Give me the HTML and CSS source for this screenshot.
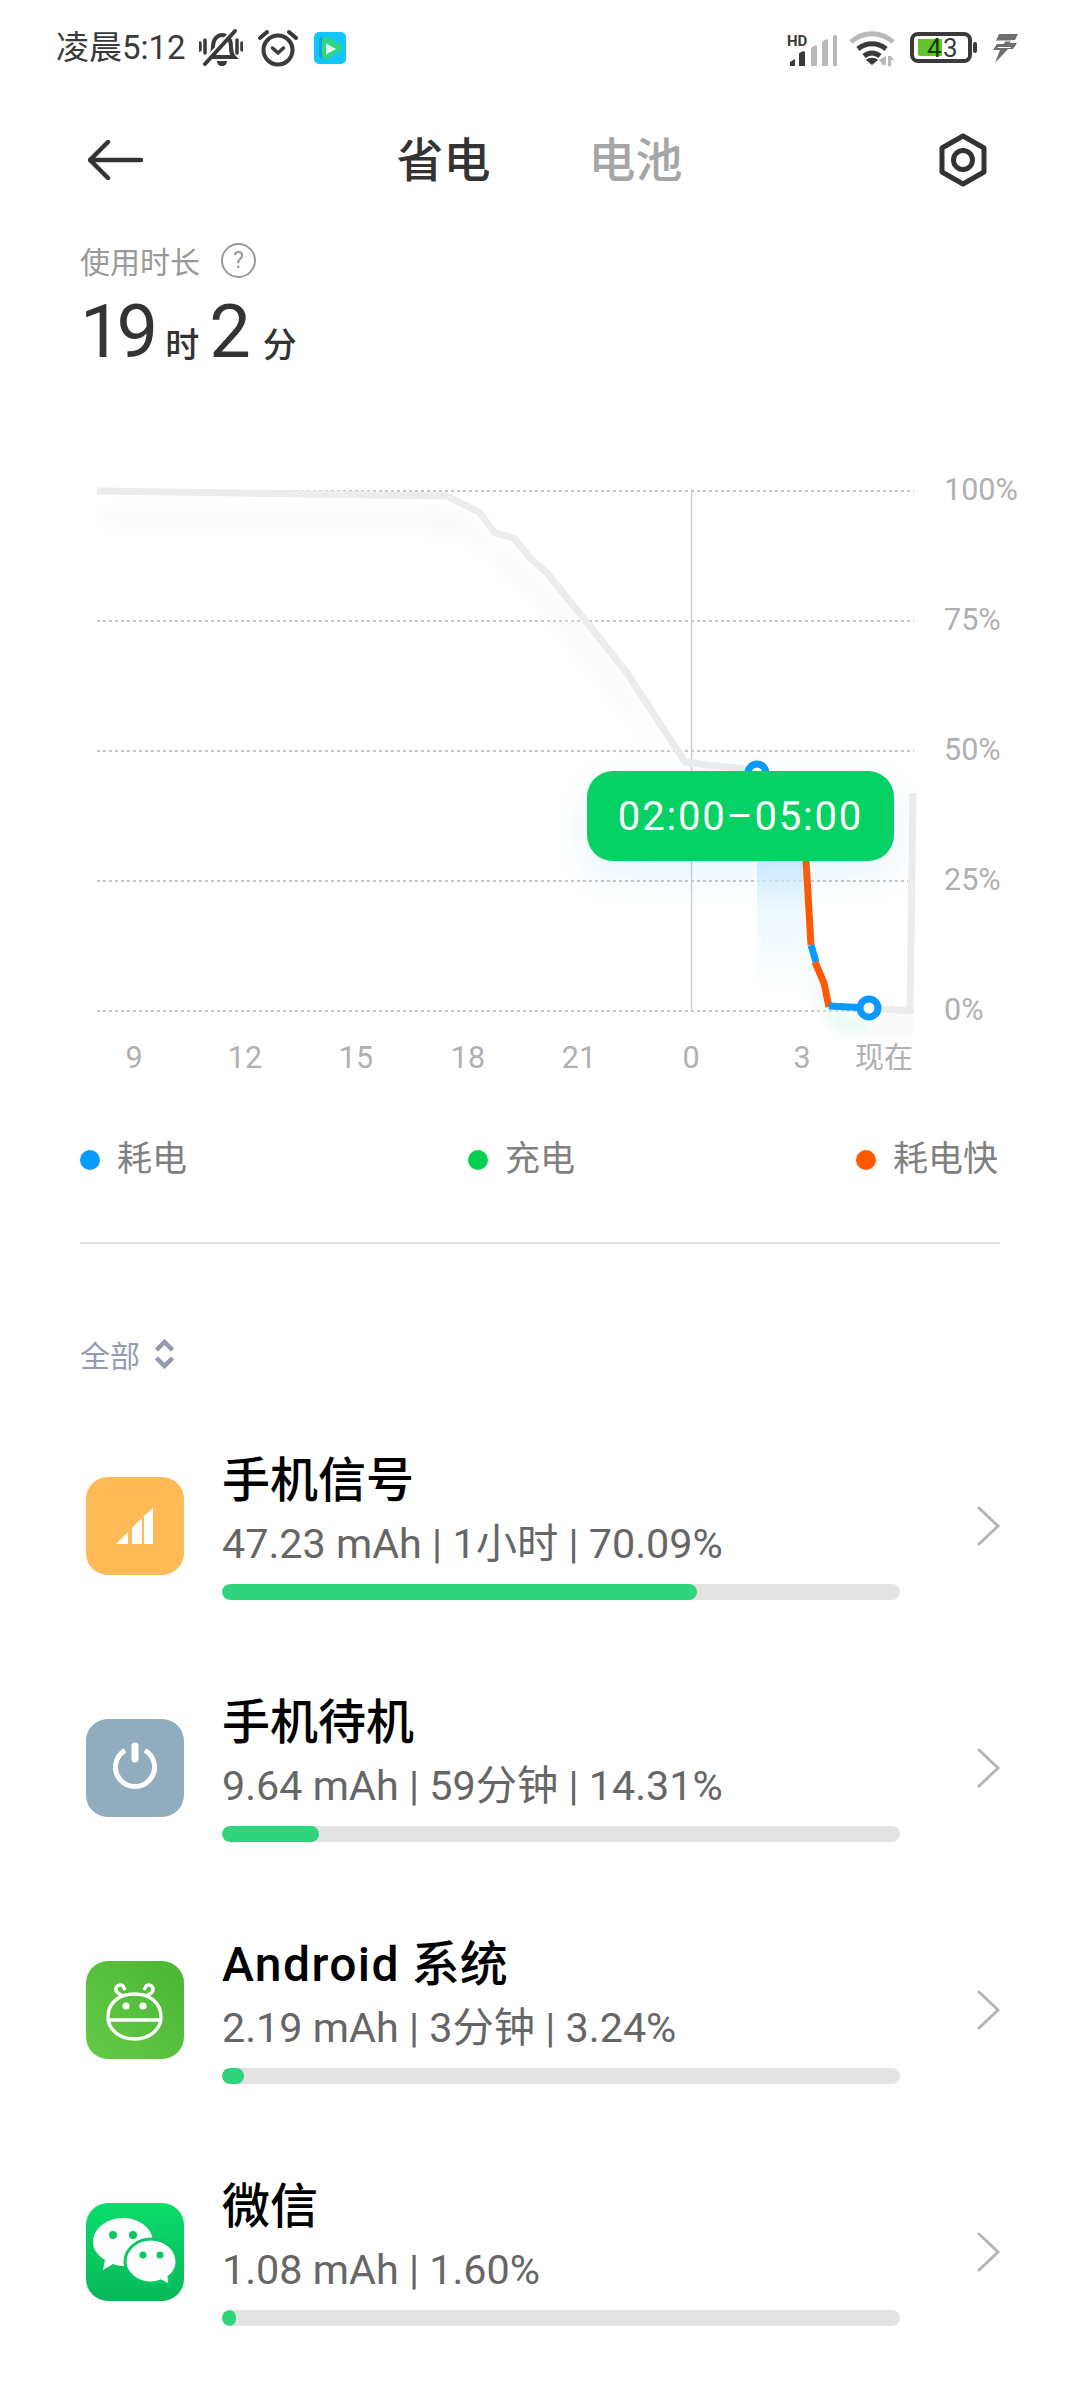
FILE: index.html
```html
<!DOCTYPE html>
<html lang="zh-CN">
<head>
<meta charset="utf-8">
<title>省电</title>
<link rel="stylesheet" href="styles.css">
</head>
<body>
<div class="screen">
  <header class="status">
    <div class="status-left">
      <span class="clock">凌晨5:12</span>
      <svg class="ic-bell" viewBox="0 0 44 40" aria-hidden="true">
        <path class="ink" d="M11 29c3-3 3-6 3-11 0-6 4-11 9-11s9 4 9 11c0 5 0 8 3 11z"/>
        <path class="cut" d="M5 33L36 0"/>
        <path class="ink" d="M6 36L36 3" />
        <path class="ink thin" d="M1 15v7M6 12v13M38 12v13M43 15v7"/>
        <path class="solid" d="M18 33h10c0 3-2 5-5 5s-5-2-5-5z"/>
      </svg>
      <svg class="ic-alarm" viewBox="0 0 40 38" aria-hidden="true">
        <circle class="ink" cx="20" cy="21" r="14.500"/>
        <path class="ink" d="M2 9L9 3M38 9L31 3"/>
        <path class="ink thin" d="M14.500 19l5.500 5 5.500-5"/>
      </svg>
      <svg class="ic-app" viewBox="0 0 32 32" aria-hidden="true">
        <rect width="32" height="32" rx="5" fill="#12c6fd"/>
        <path d="M5 8c0-3 2-3 4-3l2 0v23l-2-1c-3-1-4-2-4-4z" fill="#10a6e0"/>
        <path d="M8 8c0-3 2-4 5-3l13 7c4 2 4 5 0 7l-13 8c-3 1-5 0-5-3z" fill="#2fd783"/>
        <path d="M12 11.500l10 5.500-10 5.500z" fill="#dffbf0"/>
      </svg>
    </div>
    <div class="status-right">
      <svg class="ic-signal" viewBox="0 -6 50 40" aria-hidden="true">
        <text class="hd" x="0" y="12">HD</text>
        <path fill="#3a3a3a" d="M3 32v-4l5-3v7zM12 32V20c0-2 6-4 6-2v14z"/>
        <path fill="#b9b9b9" d="M24 32V15c0-2 6-5 6-3v20zM35 32V9c0-2 6-5 6-3v26zM46 32V3c0-2 4-3 4-1v30z"/>
      </svg>
      <svg class="ic-wifi" viewBox="0 0 46 36" aria-hidden="true">
        <path class="arc grey" d="M2 12C14 1 32 1 44 12"/>
        <path class="arc" d="M9 19c8-7 20-7 28 0"/>
        <path class="arc" d="M15 26c5-4 11-4 16 0"/>
        <path fill="#3a3a3a" d="M23 35l-6-5c3-3 9-3 12 0z"/>
        <path fill="#b9b9b9" d="M37 26v9h-3l-4-5zM39 26h3l3 4h-3v6h-3z"/>
      </svg>
      <svg class="ic-battery" viewBox="0 0 68 32" aria-hidden="true">
        <rect x="2" y="2" width="58" height="27" rx="6" fill="none" stroke="#3a3a3a" stroke-width="4"/>
        <path fill="#62c32c" d="M8 7h24v17H10c-1 0-2-1-2-2z"/>
        <rect x="63" y="10" width="4" height="11" rx="2" fill="#3a3a3a"/>
        <text class="b-tens" x="17" y="25">4</text>
        <text class="b-ones" x="33" y="25">3</text>
      </svg>
      <svg class="ic-bolt" viewBox="0 0 28 30" aria-hidden="true">
        <path fill="#6f6f6f" d="M8 1h19l-3 6h-4l-1 3h7l-4 6h-5L4 30l5-13H2l4-6h7l1-3H5z"/>
        <path fill="#fff" d="M6 7.500h16l-.6 1H5.400zM7 14h13l-.6 1H6.400z"/>
      </svg>
    </div>
  </header>

  <nav class="topbar">
    <svg class="ic-back" viewBox="0 0 56 40" aria-hidden="true">
      <path d="M2 20h51M20 2L2 20l18 18"/>
    </svg>
    <div class="tabs">
      <span class="tab tab-on">省电</span>
      <span class="tab">电池</span>
    </div>
    <svg class="ic-gear" viewBox="0 0 50 54" aria-hidden="true">
      <path d="M25 3l21 12v24L25 51 4 39V15z"/>
      <circle cx="25" cy="27" r="9.500"/>
    </svg>
  </nav>

  <section class="usage">
    <div class="usage-label">
      <span>使用时长</span>
      <span class="help">?</span>
    </div>
    <div class="usage-value">
      <span class="num">19</span><span class="unit">时</span><span class="num">2</span><span class="unit unit-end">分</span>
    </div>
  </section>

  <section class="chart">
    <svg class="plot" viewBox="0 470 1080 620" aria-label="电量曲线">
      <defs>
        <linearGradient id="drainGlow" x1="0" y1="0" x2="0" y2="1">
          <stop offset="0" stop-color="#c6e9ff" stop-opacity=".8"/>
          <stop offset=".5" stop-color="#e2f4ff" stop-opacity=".45"/>
          <stop offset="1" stop-color="#eef9ff" stop-opacity="0"/>
        </linearGradient>
        <filter id="soft" x="-10%" y="-20%" width="120%" height="140%">
          <feGaussianBlur stdDeviation="9"/>
        </filter>
        <filter id="softer" x="-30%" y="-30%" width="160%" height="160%">
          <feGaussianBlur stdDeviation="6"/>
        </filter>
      </defs>

      <g class="grid">
        <line x1="97" y1="491" x2="914" y2="491"/>
        <line x1="97" y1="621" x2="914" y2="621"/>
        <line x1="97" y1="751" x2="914" y2="751"/>
        <line x1="97" y1="881" x2="908" y2="881"/>
        <line x1="97" y1="1011" x2="914" y2="1011"/>
      </g>
      <line class="now-line" x1="691.500" y1="491" x2="691.500" y2="1011"/>

      <path class="haze" filter="url(#soft)" d="M100 512H447L479 530 495 552 514 558 530 578 547 592 590 640 627 695 670 770 685 790 620 700 540 600 470 535 400 522 100 522z"/>
      <path d="M757 850H806L811 945 816 962 824 983 829 1005H757z" fill="url(#drainGlow)"/>
      <path d="M805 975L830 1011 869 1014V1034H845Q820 1025 805 975z" fill="#e3f6ee" opacity=".7" filter="url(#softer)"/>
      <rect x="869" y="1014" width="44" height="22" fill="#fafafa"/>

      <path class="trace-idle" d="M97 491L447 496 479 512 495 533 514 538 530 558 547 573 589 625 627 673 685 762 707 765 757 770"/>
      <path class="trace-idle" d="M869 1008L910 1011 913 793"/>
      <path class="trace-fast" d="M757 773L790 800 806 860 811 945"/>
      <path class="trace-blue" d="M811 945L816 962"/>
      <path class="trace-fast" d="M815 962L824 983 829 1007"/>
      <path class="trace-blue" d="M829 1006L869 1008"/>
      <circle class="knob" cx="757" cy="773" r="9"/>
      <circle class="knob" cx="869" cy="1008" r="9"/>

      <g class="axis-y">
        <text x="944" y="500">100%</text>
        <text x="944" y="630">75%</text>
        <text x="944" y="760">50%</text>
        <text x="944" y="890">25%</text>
        <text x="944" y="1020">0%</text>
      </g>
      <g class="axis-x">
        <text x="134" y="1068">9</text>
        <text x="245" y="1068">12</text>
        <text x="356" y="1068">15</text>
        <text x="468" y="1068">18</text>
        <text x="579" y="1068">21</text>
        <text x="691" y="1068">0</text>
        <text x="802" y="1068">3</text>
        <text class="now" x="913" y="1068">现在</text>
      </g>
    </svg>
    <div class="tip">02:00–05:00</div>
  </section>

  <section class="legend">
    <span class="key"><i class="dot dot-blue"></i>耗电</span>
    <span class="key"><i class="dot dot-green"></i>充电</span>
    <span class="key"><i class="dot dot-orange"></i>耗电快</span>
  </section>

  <hr class="rule">

  <div class="filter">
    <span>全部</span>
    <svg viewBox="0 0 21 30" aria-hidden="true"><path d="M2.500 11l8-8 8 8M2.500 19l8 8 8-8"/></svg>
  </div>

  <ul class="apps">
    <li class="app">
      <svg class="app-icon" viewBox="0 0 98 98" aria-hidden="true">
        <rect width="98" height="98" rx="22" fill="#ffb957"/>
        <path fill="#fff" d="M30 67l12-12v12zM46 51l10-10v26H46zM58 39l9-8v36h-9z"/>
      </svg>
      <div class="app-info">
        <div class="app-name">手机信号</div>
        <div class="app-sub">47.23 mAh | 1小时 | 70.09%</div>
        <div class="bar"><div class="bar-fill" style="width:70.09%"></div></div>
      </div>
      <svg class="chev" viewBox="0 0 24 40" aria-hidden="true"><path d="M2 2l19 18L2 38"/></svg>
    </li>
    <li class="app">
      <svg class="app-icon" viewBox="0 0 98 98" aria-hidden="true">
        <rect width="98" height="98" rx="22" fill="#91abbf"/>
        <path class="glyph" d="M39 31.300A19.500 19.500 0 1 0 59 31.300"/>
        <path class="glyph thick" d="M49 27v13"/>
      </svg>
      <div class="app-info">
        <div class="app-name">手机待机</div>
        <div class="app-sub">9.64 mAh | 59分钟 | 14.31%</div>
        <div class="bar"><div class="bar-fill" style="width:14.31%"></div></div>
      </div>
      <svg class="chev" viewBox="0 0 24 40" aria-hidden="true"><path d="M2 2l19 18L2 38"/></svg>
    </li>
    <li class="app">
      <svg class="app-icon" viewBox="0 0 98 98" aria-hidden="true">
        <defs>
          <linearGradient id="droid" x1="0" y1="1" x2="1" y2="0">
            <stop offset="0" stop-color="#66ca48"/>
            <stop offset="1" stop-color="#4ab634"/>
          </linearGradient>
        </defs>
        <rect width="98" height="98" rx="22" fill="url(#droid)"/>
        <path class="line" d="M22 56C22 41 34 33 48.500 33S75 41 75 56C75 69 63 78 48.500 78S22 69 22 56zM23 59H74M36 34c-3-1-7-3-6-7 1-3 5-4 7-2l2 4M61 34c3-1 7-3 6-7-1-3-5-4-7-2l-2 4"/>
        <circle cx="40" cy="45" r="3.600" fill="#fff"/>
        <circle cx="57" cy="45" r="3.600" fill="#fff"/>
      </svg>
      <div class="app-info">
        <div class="app-name"><span class="latin">Android</span> 系统</div>
        <div class="app-sub">2.19 mAh | 3分钟 | 3.24%</div>
        <div class="bar"><div class="bar-fill" style="width:3.24%"></div></div>
      </div>
      <svg class="chev" viewBox="0 0 24 40" aria-hidden="true"><path d="M2 2l19 18L2 38"/></svg>
    </li>
    <li class="app">
      <svg class="app-icon" viewBox="0 0 98 98" aria-hidden="true">
        <defs>
          <linearGradient id="chat" x1="0" y1="0" x2="0" y2="1">
            <stop offset="0" stop-color="#0bdc6a"/>
            <stop offset="1" stop-color="#07b85a"/>
          </linearGradient>
        </defs>
        <rect width="98" height="98" rx="22" fill="url(#chat)"/>
        <path fill="#fff" d="M37 15c17 0 30 11 30 24s-13 24-30 24c-4 0-7-1-10-2l-10 6 2-10C11 52 7 46 7 39c0-13 13-24 30-24z"/>
        <path fill="#fff" stroke="#0ac663" stroke-width="3" d="M65 36c14 0 26 10 26 23 0 6-3 11-8 15l1 9-9-5c-3 1-6 2-10 2-14 0-26-10-26-21 0-13 12-23 26-23z"/>
        <g fill="#0ac663">
          <circle cx="27" cy="32" r="4"/><circle cx="47" cy="32" r="4"/>
          <circle cx="57" cy="52" r="3.500"/><circle cx="74" cy="52" r="3.500"/>
        </g>
      </svg>
      <div class="app-info">
        <div class="app-name">微信</div>
        <div class="app-sub">1.08 mAh | 1.60%</div>
        <div class="bar"><div class="bar-fill" style="width:1.6%"></div></div>
      </div>
      <svg class="chev" viewBox="0 0 24 40" aria-hidden="true"><path d="M2 2l19 18L2 38"/></svg>
    </li>
  </ul>
</div>
</body>
</html>
```
FILE: styles.css
```css
* { box-sizing: border-box; }

html, body { margin: 0; padding: 0; background: #fff; }

body {
  font-family: Roboto, "Noto Sans CJK SC", sans-serif;
  color: #333;
}

.screen {
  width: 1080px;
  height: 2400px;
  overflow: hidden;
  background: #fff;
}

/* status bar */
.status {
  height: 96px;
  padding: 0 61px 0 56px;
  display: flex;
  align-items: center;
  justify-content: space-between;
}
.status-left, .status-right { display: flex; align-items: center; }
.clock { font-size: 33px; line-height: 40px; color: #3a3a3a; width: 143px; white-space: nowrap; }

.ic-bell { width: 44px; height: 40px; }
.ic-alarm { width: 40px; height: 38px; margin-left: 15px; }
.ic-app { width: 32px; height: 32px; margin-left: 16px; }
.ink { fill: none; stroke: #3a3a3a; stroke-width: 4; stroke-linecap: round; }
.ink.thin { stroke-width: 3.500; }
.cut { fill: none; stroke: #fff; stroke-width: 3; }
.solid { fill: #3a3a3a; }

.ic-signal { width: 50px; height: 40px; }
.hd { font: 700 15px Roboto, sans-serif; fill: #3a3a3a; }
.ic-wifi { width: 46px; height: 36px; margin-left: 12px; }
.arc { fill: none; stroke: #3a3a3a; stroke-width: 5; }
.arc.grey { stroke: #b9b9b9; }
.ic-battery { width: 68px; height: 32px; margin-left: 15px; }
.b-tens { font: 400 26px Roboto, sans-serif; fill: #153a05; }
.b-ones { font: 400 26px Roboto, sans-serif; fill: #3a3a3a; }
.ic-bolt { width: 28px; height: 30px; margin-left: 13px; }

/* title row */
.topbar {
  height: 128px;
  padding: 0 92px 0 88px;
  display: flex;
  align-items: center;
  justify-content: space-between;
}
.ic-back { width: 56px; height: 40px; }
.ic-back path { fill: none; stroke: #333; stroke-width: 4.500; stroke-linecap: round; stroke-linejoin: round; }
.ic-gear { width: 50px; height: 54px; }
.ic-gear path, .ic-gear circle { fill: none; stroke: #333; stroke-width: 5; stroke-linejoin: round; }
.tabs { display: flex; gap: 98px; margin: 2px 0 0 -3px; }
.tab { font-size: 47px; line-height: 56px; color: #a6a6a6; font-weight: 500; }
.tab-on { color: #333; }

/* used time */
.usage { padding: 16px 80px 0; height: 246px; }
.usage-label {
  display: flex;
  align-items: center;
  gap: 21px;
  height: 40px;
  font-size: 30px;
  color: #999;
}
.help {
  width: 35px;
  height: 35px;
  border: 2px solid #999;
  border-radius: 50%;
  display: flex;
  align-items: center;
  justify-content: center;
  font-size: 23px;
}
.usage-value { display: flex; align-items: baseline; margin-top: 8px; line-height: 88px; }
.num { font-size: 74px; letter-spacing: -5px; color: #333; }
.unit { font-size: 34px; margin: 0 10px 0 12px; font-weight: 500; }
.unit-end { margin-left: 17px; }

/* battery chart */
.chart { position: relative; height: 620px; }
.plot { display: block; width: 1080px; height: 620px; }
.grid line { stroke: #b4b4b4; stroke-width: 1.500; stroke-dasharray: 3 3; }
.now-line { stroke: #cfcfcf; stroke-width: 1.500; }
.haze { fill: #f2f2f2; opacity: .55; }
.trace-idle, .trace-fast, .trace-blue { fill: none; stroke-width: 7; stroke-linejoin: miter; }
.trace-idle { stroke: #ececec; }
.trace-fast { stroke: #ff5a00; }
.trace-blue { stroke: #0a99ff; }
.knob { fill: #fff; stroke: #0a99ff; stroke-width: 7; }
.axis-y text, .axis-x text { font-size: 30.500px; fill: #b0b0b0; }
.axis-x text { text-anchor: middle; }
.axis-x .now { text-anchor: end; font-size: 29px; }
.tip {
  position: absolute;
  left: 587px;
  top: 301px;
  width: 307px;
  height: 90px;
  border-radius: 26px;
  background: #05d164;
  color: #fff;
  font-size: 40px;
  letter-spacing: 1.800px;
  display: flex;
  align-items: center;
  justify-content: center;
  box-shadow: 0 14px 36px rgba(60, 170, 255, .12);
}

/* colour key */
.legend {
  margin-top: 48px;
  padding: 0 82px 0 80px;
  height: 44px;
  display: flex;
  justify-content: space-between;
  align-items: center;
}
.key { display: flex; align-items: center; gap: 17px; font-size: 35px; color: #808080; line-height: 44px; }
.dot { width: 20px; height: 20px; border-radius: 50%; display: block; }
.dot-blue { background: #0a99ff; }
.dot-green { background: #05cf4f; }
.dot-orange { background: #ff5a00; }

.rule { margin: 60px 80px 0; height: 2px; border: 0; background: #e4e4e4; }

/* filter */
.filter {
  margin: 92px 0 0 80px;
  display: flex;
  align-items: center;
  gap: 14px;
  height: 36px;
  font-size: 30px;
  color: #9499b2;
}
.filter svg { width: 21px; height: 30px; }
.filter path { fill: none; stroke: #9499b2; stroke-width: 4.500; }

/* app list */
.apps { list-style: none; margin: 80px 0 0; padding: 0; display: flex; flex-direction: column; gap: 94px; }
.app { display: flex; align-items: center; padding-left: 86px; height: 148px; }
.app-icon { width: 98px; height: 98px; flex: none; }
.app-info { width: 678px; margin-left: 38px; }
.app-name { font-size: 48px; line-height: 56px; color: #000; font-weight: 500; white-space: nowrap; }
.latin { letter-spacing: 1.400px; }
.app-sub { font-size: 41.300px; line-height: 50px; margin-top: 10px; color: #666; white-space: nowrap; }
.bar { height: 16px; margin-top: 15px; background: #e3e3e3; border-radius: 8px; overflow: hidden; }
.bar-fill { height: 100%; min-width: 14px; background: #2fd57c; border-radius: 8px; }
.chev { width: 24px; height: 40px; margin-left: 77px; }
.chev path { fill: none; stroke: #b5b5b5; stroke-width: 3; stroke-linecap: round; }

.glyph { fill: none; stroke: #fff; stroke-width: 5; stroke-linecap: butt; }
.glyph.thick { stroke-width: 7; stroke-linecap: round; }
.line { fill: none; stroke: #fff; stroke-width: 3.400; }
```
